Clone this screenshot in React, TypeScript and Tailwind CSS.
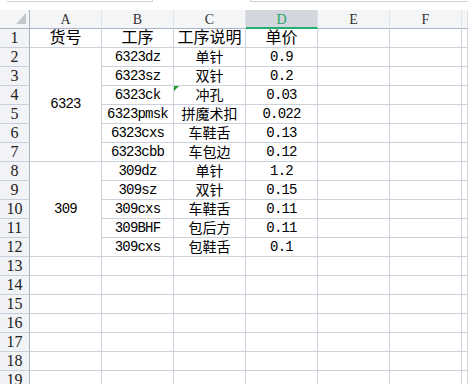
import React from "react";

const FONT = { fontFamily: '"Liberation Serif", "Noto Sans CJK SC", serif' };
const MONO = { fontFamily: '"Liberation Mono", "Noto Sans CJK SC", monospace' };

type Row = { b: string; c: string; d: string };
const rows: Row[] = [
  { b: "6323dz", c: "单针", d: "0.9" },
  { b: "6323sz", c: "双针", d: "0.2" },
  { b: "6323ck", c: "冲孔", d: "0.03" },
  { b: "6323pmsk", c: "拼魔术扣", d: "0.022" },
  { b: "6323cxs", c: "车鞋舌", d: "0.13" },
  { b: "6323cbb", c: "车包边", d: "0.12" },
  { b: "309dz", c: "单针", d: "1.2" },
  { b: "309sz", c: "双针", d: "0.15" },
  { b: "309cxs", c: "车鞋舌", d: "0.11" },
  { b: "309BHF", c: "包后方", d: "0.11" },
  { b: "309cxs", c: "包鞋舌", d: "0.1" },
];

const cell = "flex items-center justify-center border-r border-b border-[#cdd1dc] bg-white text-[14px] text-black whitespace-nowrap";
const mono = " text-[13px] tracking-[-0.8px]";
const rh = "flex items-center justify-center border-r border-b border-r-[#aab3c4] border-b-[#c9cedb] bg-[#f2f3f6] text-[16px] text-[#222]";

export default function App() {
  const cells: React.ReactNode[] = [];
  cells.push(
    <div key="corner" className="relative border-r border-b border-r-[#aab3c4] border-b-[#aab3c4] bg-[#f4f5f7]">
      <svg className="absolute right-[3px] bottom-[4px]" width="10" height="11" viewBox="0 0 10 11">
        <polygon points="10,0 10,11 0,11" fill="#c3c6cc" />
      </svg>
    </div>
  );
  ["A", "B", "C", "D", "E", "F", ""].forEach((l) => {
    if (l === "D") {
      cells.push(
        <div key="hD" className="flex items-center justify-center border-r border-r-[#dfe2e8] border-b-2 border-b-[#1fb171] bg-[#d3d6dd] text-[14px] text-[#1fa866] pt-[1px]">
          {l}
        </div>
      );
    } else {
      cells.push(
        <div key={"h" + l} className="flex items-center justify-center border-r border-b border-r-[#dfe2e8] border-b-[#aab3c4] bg-[#f4f5f7] text-[14px] text-[#333]">
          {l}
        </div>
      );
    }
  });
  cells.push(<div key="r1" className={rh}>1</div>);
  ["货号", "工序", "工序说明", "单价"].forEach((t, i) =>
    cells.push(
      <div key={"t" + i} className={cell + " text-[16px]"}>
        {t}
      </div>
    )
  );
  cells.push(<div key="t4" className={cell} />, <div key="t5" className={cell} />, <div key="t6" className={cell} />);

  for (let r = 2; r <= 20; r++) {
    cells.push(<div key={"rh" + r} className={rh}>{r}</div>);
    if (r === 2) {
      cells.push(<div key="m1" className={cell + mono + " row-span-6"} style={MONO}>6323</div>);
    } else if (r === 8) {
      cells.push(<div key="m2" className={cell + mono + " row-span-5"} style={MONO}>309</div>);
    } else if (r >= 13) {
      cells.push(<div key={"a" + r} className={cell} />);
    }
    const d = rows[r - 2];
    if (d) {
      cells.push(<div key={"b" + r} className={cell + mono} style={MONO}>{d.b}</div>);
      cells.push(
        <div key={"c" + r} className={cell + " relative"}>
          {r === 4 && (
            <svg className="absolute left-0 top-0" width="5" height="5" viewBox="0 0 5 5">
              <polygon points="0,0 5,0 0,5" fill="#1e9e34" />
            </svg>
          )}
          {d.c}
        </div>
      );
      cells.push(<div key={"d" + r} className={cell + mono} style={MONO}>{d.d}</div>);
    } else {
      cells.push(<div key={"b" + r} className={cell} />, <div key={"c" + r} className={cell} />, <div key={"d" + r} className={cell} />);
    }
    cells.push(<div key={"e" + r} className={cell} />, <div key={"f" + r} className={cell} />, <div key={"g" + r} className={cell} />);
  }

  return (
    <div className="w-[468px] h-[384px] overflow-hidden bg-white" style={FONT}>
      <div className="h-[10px] flex bg-white">
        <div className="ml-[7px] w-[146px] h-[2px] border-b border-r border-[#d2d2d2]" />
        <div className="ml-[97px] flex-1 h-[2px] border-b border-l border-[#d2d2d2]" />
      </div>
      <div className="grid grid-cols-[30px_repeat(6,72px)_1fr] auto-rows-[19px]">{cells}</div>
    </div>
  );
}
